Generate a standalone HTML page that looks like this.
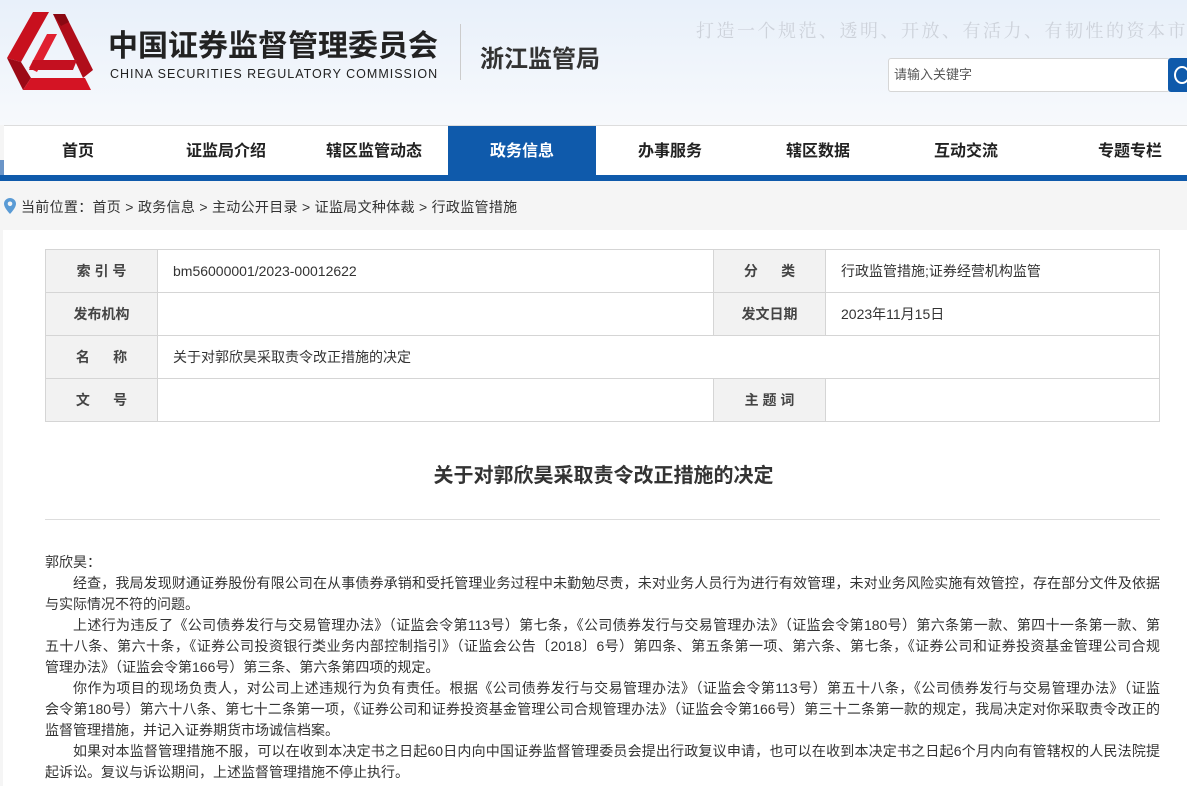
<!DOCTYPE html>
<html><head><meta charset="utf-8">
<style>
*{margin:0;padding:0;box-sizing:border-box}
body{width:1187px;height:786px;overflow:hidden;background:#f5f5f5;font-family:"Liberation Sans","Noto Sans CJK SC","Microsoft YaHei",sans-serif;color:#333;position:relative}
.hdr{position:absolute;left:0;top:0;width:1187px;height:125px;background:linear-gradient(#e8f0fa,#f7f9fc)}
.abs{position:absolute;white-space:nowrap}
.nav{position:absolute;left:4px;top:125px;width:1183px;height:50px;background:#fff;border-top:1px solid #ddd}
.nav div{position:absolute;top:0;height:50px;line-height:52px;font-size:16px;font-weight:bold;color:#222;text-align:center;width:148px}
.bar{position:absolute;left:0;top:175px;width:1187px;height:6px;background:#0f5aab}
.main{position:absolute;left:3px;top:230px;width:1184px;height:556px;background:#fff}
table{position:absolute;left:45px;top:249px;width:1115px;border-collapse:collapse;font-size:14px}
td{border:1px solid #d5d5d5;height:43px;padding:0 15px;color:#333}
td.l{background:#f2f2f2;text-align:center;font-weight:bold;color:#444;width:112px;padding:0}
.body{position:absolute;left:45px;top:552px;width:1115px;font-size:14px;line-height:21px;color:#333}
.body div{white-space:nowrap;text-align:justify;text-align-last:justify}
.body div.e{text-align-last:left}
.i{padding-left:28px}
</style></head><body>
<div class="hdr"></div>
<svg class="abs" style="left:3px;top:12px" width="90" height="80" viewBox="0 0 90 80">
<polygon points="30,0 46,0 18,50 4,46" fill="#c8101e"/>
<polygon points="4,46 18,50 28,66 20,78" fill="#9c0a16"/>
<polygon points="20,78 28,66 82,66 88,78" fill="#d41424"/>
<polygon points="50,2 62,2 90,58 80,66" fill="#b00d1a"/>
<polygon points="62,2 50,2 58,14 66,10" fill="#8a0812"/>
<polygon points="44,22 54,22 34,60 26,56" fill="#e02030"/>
<polygon points="30,48 74,48 70,58 26,58" fill="#c41020"/>
</svg>
<div class="abs" style="left:108px;top:21px;font-size:30px;font-weight:bold;color:#222">中国证券监督管理委员会</div>
<div class="abs" style="left:110px;top:67px;font-size:12.5px;color:#222;letter-spacing:1px">CHINA SECURITIES REGULATORY COMMISSION</div>
<div class="abs" style="left:460px;top:24px;width:1px;height:56px;background:#ccc"></div>
<div class="abs" style="left:480px;top:39px;font-size:24px;font-weight:bold;color:#333">浙江监管局</div>
<div class="abs" style="left:696px;top:17px;font-size:18px;color:#cdd2da;font-family:'Liberation Serif','Noto Serif CJK SC',serif;letter-spacing:2.5px">打造一个规范、透明、开放、有活力、有韧性的资本市场</div>
<div class="abs" style="left:888px;top:58px;width:282px;height:34px;background:#fff;border:1px solid #d6d6d6;border-radius:3px;font-size:13px;color:#555;line-height:32px;padding-left:5px">请输入关键字</div>
<div class="abs" style="left:1168px;top:58px;width:22px;height:34px;background:#0f5aab;border-radius:3px 0 0 3px"></div>
<div class="abs" style="left:1174px;top:66px;width:16px;height:18px;border:2px solid #fff;border-radius:50%"></div>
<div class="abs" style="left:0;top:160px;width:4px;height:15px;background:#6b95c8"></div>
<div class="nav">
<div style="left:0">首页</div><div style="left:148px">证监局介绍</div><div style="left:296px">辖区监管动态</div>
<div style="left:444px;background:#0f5aab;color:#fff">政务信息</div>
<div style="left:592px">办事服务</div><div style="left:740px">辖区数据</div><div style="left:888px">互动交流</div><div style="left:1052px">专题专栏</div>
</div>
<div class="bar"></div>
<svg class="abs" style="left:4px;top:198px" width="12" height="16" viewBox="0 0 12 16"><path d="M6 0C2.7 0 0 2.6 0 5.8 0 10 6 16 6 16s6-6 6-10.2C12 2.6 9.3 0 6 0z" fill="#5a9bd5"/><circle cx="6" cy="5.8" r="2.3" fill="#f5f5f5"/></svg>
<div class="abs" style="left:21px;top:197px;font-size:14px;color:#333;letter-spacing:0.3px">当前位置：首页 &gt; 政务信息 &gt; 主动公开目录 &gt; 证监局文种体裁 &gt; 行政监管措施</div>
<div class="main"></div>
<table>
<tr><td class="l">索 引 号</td><td style="width:556px">bm56000001/2023-00012622</td><td class="l">分&nbsp;&nbsp;&nbsp;&nbsp;&nbsp;&nbsp;类</td><td>行政监管措施;证券经营机构监管</td></tr>
<tr><td class="l">发布机构</td><td></td><td class="l">发文日期</td><td>2023年11月15日</td></tr>
<tr><td class="l">名&nbsp;&nbsp;&nbsp;&nbsp;&nbsp;&nbsp;称</td><td colspan="3">关于对郭欣昊采取责令改正措施的决定</td></tr>
<tr><td class="l">文&nbsp;&nbsp;&nbsp;&nbsp;&nbsp;&nbsp;号</td><td></td><td class="l">主 题 词</td><td></td></tr>
</table>
<div class="abs" style="left:0;top:459px;width:1187px;text-align:center;font-size:20px;font-weight:bold;color:#333;padding-left:20px">关于对郭欣昊采取责令改正措施的决定</div>
<div class="abs" style="left:45px;top:519px;width:1115px;height:1px;background:#ddd"></div>
<div class="body">
<div class="e">郭欣昊：</div>
<div class="i">经查，我局发现财通证券股份有限公司在从事债券承销和受托管理业务过程中未勤勉尽责，未对业务人员行为进行有效管理，未对业务风险实施有效管控，存在部分文件及依据</div>
<div class="e">与实际情况不符的问题。</div>
<div class="i">上述行为违反了《公司债券发行与交易管理办法》（证监会令第113号）第七条，《公司债券发行与交易管理办法》（证监会令第180号）第六条第一款、第四十一条第一款、第</div>
<div>五十八条、第六十条，《证券公司投资银行类业务内部控制指引》（证监会公告〔2018〕6号）第四条、第五条第一项、第六条、第七条，《证券公司和证券投资基金管理公司合规</div>
<div class="e">管理办法》（证监会令第166号）第三条、第六条第四项的规定。</div>
<div class="i">你作为项目的现场负责人，对公司上述违规行为负有责任。根据《公司债券发行与交易管理办法》（证监会令第113号）第五十八条，《公司债券发行与交易管理办法》（证监</div>
<div>会令第180号）第六十八条、第七十二条第一项，《证券公司和证券投资基金管理公司合规管理办法》（证监会令第166号）第三十二条第一款的规定，我局决定对你采取责令改正的</div>
<div class="e">监督管理措施，并记入证券期货市场诚信档案。</div>
<div class="i">如果对本监督管理措施不服，可以在收到本决定书之日起60日内向中国证券监督管理委员会提出行政复议申请，也可以在收到本决定书之日起6个月内向有管辖权的人民法院提</div>
<div class="e">起诉讼。复议与诉讼期间，上述监督管理措施不停止执行。</div>
</div>
</body></html>
